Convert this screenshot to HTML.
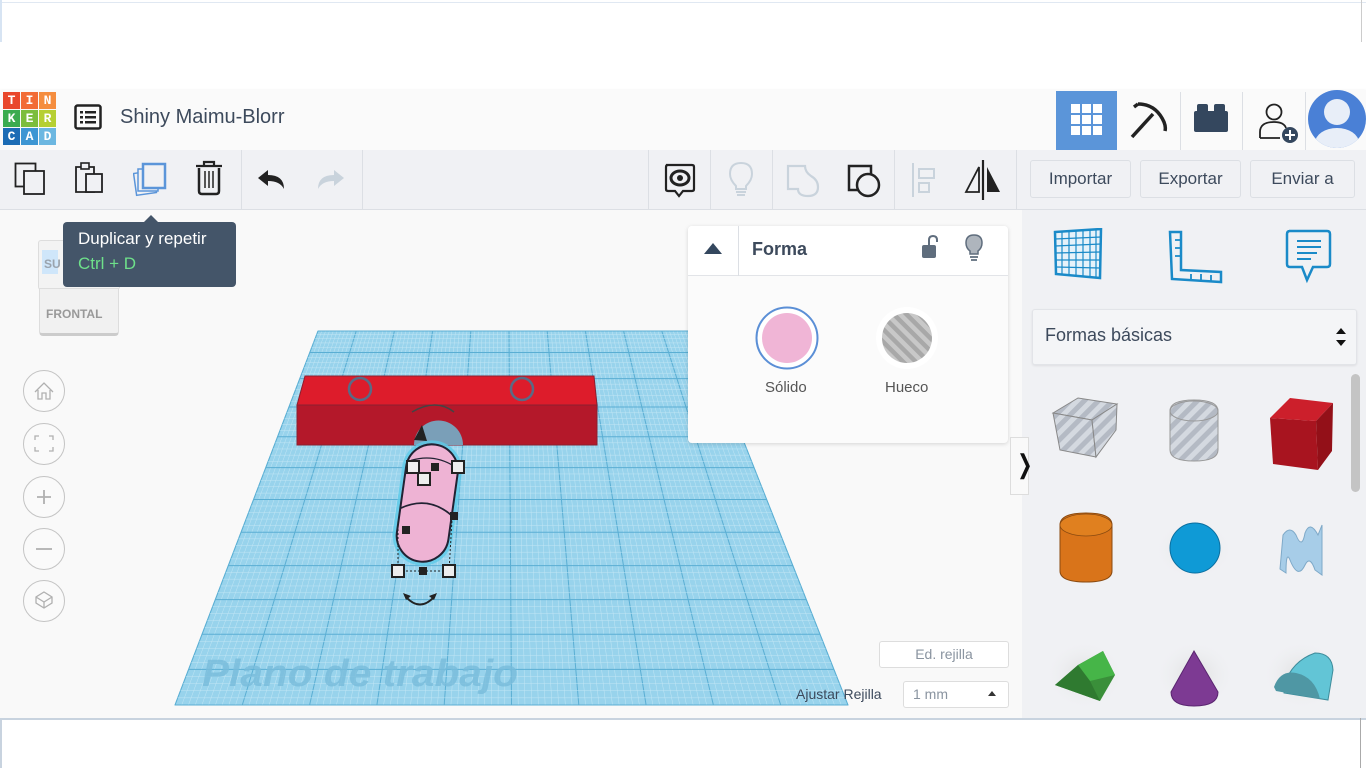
<!DOCTYPE html>
<html><head><meta charset="utf-8">
<style>
*{box-sizing:border-box;margin:0;padding:0}
body{width:1366px;height:768px;overflow:hidden;background:#fff;font-family:"Liberation Sans",sans-serif;position:relative}
.a{position:absolute}
.hdr{left:0;top:90px;width:1366px;height:60px;background:#fafafa;box-shadow:0 1px 3px rgba(0,0,0,.12)}
.tb{left:0;top:150px;width:1366px;height:60px;background:#f0f1f4;border-bottom:1px solid #dcdfe4}
.logo div{position:absolute;width:17px;height:17px;color:#fff;font:bold 13px "Liberation Mono",monospace;text-align:center;line-height:17px}
.btn{top:160px;height:38px;border:1px solid #dcdfe4;border-radius:3px;background:#f0f1f4;color:#3d4a5c;font-size:17px;text-align:center;line-height:36px}
.sep{width:1px;background:#dcdfe4}
.nav{left:23px;width:42px;height:42px;border:1px solid #c4c4c4;border-radius:50%;background:#fafafa}
</style></head><body>
<div class="a" style="left:0;top:0;width:1366px;height:3px;border-bottom:1px solid #e0e8f2"></div>
<div class="a" style="left:0;top:0;width:2px;height:42px;background:#d7e4f3"></div>
<div class="a" style="left:1361px;top:0;width:5px;height:42px;border-left:1px solid #ccc"></div>

<div class="a hdr"></div>
<div class="a logo" style="left:3px;top:92px;width:54px;height:54px">
<div style="left:0;top:0;background:#e9472c">T</div><div style="left:18px;top:0;background:#f26c36">I</div><div style="left:36px;top:0;background:#f58d3e">N</div>
<div style="left:0;top:18px;background:#3bab4f">K</div><div style="left:18px;top:18px;background:#7cbd3c">E</div><div style="left:36px;top:18px;background:#b6cf33">R</div>
<div style="left:0;top:36px;background:#1c6cb5">C</div><div style="left:18px;top:36px;background:#3d96d3">A</div><div style="left:36px;top:36px;background:#6cb7e1">D</div>
</div>
<svg class="a" style="left:74px;top:104px" width="28" height="26" viewBox="0 0 28 26"><rect x="1.5" y="1.5" width="25" height="23" rx="2" fill="none" stroke="#222" stroke-width="2.5"/><g fill="#222"><rect x="6" y="7" width="3" height="2.5"/><rect x="11" y="7" width="11" height="2.5"/><rect x="6" y="12" width="3" height="2.5"/><rect x="11" y="12" width="11" height="2.5"/><rect x="6" y="17" width="3" height="2.5"/><rect x="11" y="17" width="11" height="2.5"/></g></svg>
<div class="a" style="left:120px;top:106px;font-size:20px;color:#3d4a5c">Shiny Maimu-Blorr</div>
<div class="a" style="left:1056px;top:91px;width:61px;height:59px;background:#5b95d9"></div>
<svg class="a" style="left:1071px;top:104px" width="32" height="32"><g fill="#fff"><rect x="0" y="0" width="9" height="9"/><rect x="11" y="0" width="9" height="9"/><rect x="22" y="0" width="9" height="9"/><rect x="0" y="11" width="9" height="9"/><rect x="11" y="11" width="9" height="9"/><rect x="22" y="11" width="9" height="9"/><rect x="0" y="22" width="9" height="9"/><rect x="11" y="22" width="9" height="9"/><rect x="22" y="22" width="9" height="9"/></g></svg>
<svg class="a" style="left:1128px;top:100px" width="42" height="40" viewBox="0 0 42 40"><path d="M4 37 L25 14" stroke="#222" stroke-width="3.5"/><path d="M10 4 Q28 4 36 22 Q38 27 37 31" fill="none" stroke="#222" stroke-width="3.5"/><path d="M10 4 L6 7" stroke="#222" stroke-width="3.5"/></svg>
<div class="a sep" style="left:1180px;top:92px;height:58px"></div>
<svg class="a" style="left:1194px;top:104px" width="34" height="28"><rect x="0" y="7" width="34" height="21" rx="2" fill="#34475e"/><rect x="3" y="0" width="11" height="9" rx="2" fill="#34475e"/><rect x="20" y="0" width="11" height="9" rx="2" fill="#34475e"/></svg>
<div class="a sep" style="left:1242px;top:92px;height:58px"></div>
<svg class="a" style="left:1258px;top:100px" width="44" height="44" viewBox="0 0 44 44"><circle cx="16" cy="12" r="7.5" fill="none" stroke="#222" stroke-width="1.8"/><path d="M2 38 V32 Q2 22 16 22 Q26 22 28 28" fill="none" stroke="#222" stroke-width="1.8"/><path d="M2 38 H22" stroke="#222" stroke-width="1.8"/><circle cx="32" cy="35" r="8" fill="#34475e"/><path d="M32 30 V40 M27 35 H37" stroke="#fff" stroke-width="2"/></svg>
<div class="a sep" style="left:1305px;top:92px;height:58px"></div>
<div class="a" style="left:1308px;top:90px;width:58px;height:58px;border-radius:50%;background:#4a80d6;overflow:hidden"><div class="a" style="left:16px;top:9px;width:26px;height:26px;border-radius:50%;background:#e8eef8"></div><div class="a" style="left:7px;top:38px;width:44px;height:30px;border-radius:50%;background:#e8eef8"></div></div>

<div class="a tb"></div>
<svg class="a" style="left:14px;top:162px" width="32" height="34"><rect x="1.5" y="1.5" width="20" height="23" fill="none" stroke="#222" stroke-width="1.8"/><rect x="10" y="9" width="20" height="23" fill="#f0f1f4" stroke="#222" stroke-width="1.8"/></svg>
<svg class="a" style="left:74px;top:162px" width="30" height="34"><path d="M2 5 H20 V30 H2 Z" fill="none" stroke="#222" stroke-width="1.8"/><rect x="7" y="1" width="8" height="6" fill="#f0f1f4" stroke="#222" stroke-width="1.6"/><rect x="12" y="12" width="16" height="18" fill="#f0f1f4" stroke="#222" stroke-width="1.8"/></svg>
<svg class="a" style="left:133px;top:162px" width="36" height="36"><rect x="2" y="10" width="20" height="22" fill="none" stroke="#5b95d9" stroke-width="1.5" transform="rotate(-8 12 21)"/><rect x="5" y="7" width="20" height="22" fill="#f0f1f4" stroke="#5b95d9" stroke-width="1.5"/><rect x="10" y="2" width="22" height="24" fill="#f0f1f4" stroke="#5b95d9" stroke-width="2.5"/></svg>
<svg class="a" style="left:194px;top:160px" width="30" height="36"><path d="M2 6 H28 M10 6 V2 H20 V6" fill="none" stroke="#222" stroke-width="2.2"/><path d="M5 8 V31 Q5 34 8 34 H22 Q25 34 25 31 V8" fill="none" stroke="#222" stroke-width="2.5"/><path d="M11 11 V28 M15 11 V28 M19 11 V28" stroke="#222" stroke-width="1.5"/></svg>
<div class="a sep" style="left:241px;top:150px;height:59px"></div>
<svg class="a" style="left:256px;top:168px" width="32" height="22"><path d="M12 2 L2 10 L12 18 V13 Q24 13 28 21 Q28 7 12 7 Z" fill="#222"/></svg>
<svg class="a" style="left:314px;top:168px" width="32" height="22"><path d="M20 2 L30 10 L20 18 V13 Q8 13 4 21 Q4 7 20 7 Z" fill="#c9d3dc"/></svg>
<div class="a sep" style="left:362px;top:150px;height:59px"></div>
<div class="a sep" style="left:648px;top:150px;height:59px"></div>
<svg class="a" style="left:663px;top:162px" width="34" height="38"><path d="M3 3 H29 Q31 3 31 5 V27 Q31 29 29 29 H20 L16 34 L12 29 H5 Q3 29 3 27 V5 Q3 3 5 3Z" fill="none" stroke="#222" stroke-width="2.2"/><ellipse cx="17" cy="16" rx="9" ry="7" fill="none" stroke="#222" stroke-width="3"/><circle cx="17" cy="16" r="3" fill="#222"/></svg>
<div class="a sep" style="left:710px;top:150px;height:59px"></div>
<svg class="a" style="left:727px;top:161px" width="28" height="36"><path d="M14 2 Q25 2 25 13 Q25 19 19 25 V28 H9 V25 Q3 19 3 13 Q3 2 14 2Z" fill="none" stroke="#c9d3dc" stroke-width="2"/><path d="M9 31 H19 M10 34 H18" stroke="#c9d3dc" stroke-width="2"/></svg>
<div class="a sep" style="left:772px;top:150px;height:59px"></div>
<svg class="a" style="left:785px;top:163px" width="36" height="36"><path d="M3 3 H20 Q20 9 26 13 Q33 17 33 24 Q33 33 23 33 Q13 33 13 26 H3 Z" fill="none" stroke="#c9d3dc" stroke-width="2.2"/></svg>
<svg class="a" style="left:846px;top:163px" width="36" height="36"><rect x="3" y="3" width="22" height="24" fill="none" stroke="#222" stroke-width="2.5"/><circle cx="22" cy="22" r="11" fill="#f0f1f4" stroke="#222" stroke-width="2.5"/></svg>
<div class="a sep" style="left:894px;top:150px;height:59px"></div>
<svg class="a" style="left:910px;top:163px" width="30" height="36"><path d="M3 0 V34" stroke="#c9d3dc" stroke-width="2"/><rect x="9" y="6" width="15" height="9" fill="none" stroke="#c9d3dc" stroke-width="2"/><rect x="9" y="20" width="10" height="9" fill="none" stroke="#c9d3dc" stroke-width="2"/></svg>
<svg class="a" style="left:963px;top:160px" width="40" height="40"><path d="M20 0 V40" stroke="#222" stroke-width="2.2"/><path d="M16 7 L3 32 H16 Z" fill="none" stroke="#222" stroke-width="1.8"/><path d="M24 7 L37 32 H24 Z" fill="#222"/></svg>
<div class="a sep" style="left:1016px;top:150px;height:59px"></div>
<div class="a btn" style="left:1030px;width:101px">Importar</div>
<div class="a btn" style="left:1140px;width:101px">Exportar</div>
<div class="a btn" style="left:1250px;width:105px">Enviar a</div>

<!-- canvas -->
<div class="a" style="left:0;top:210px;width:1022px;height:508px;background:#f9f9f9"></div>
<div class="a" style="left:1022px;top:210px;width:344px;height:508px;background:#f0f1f4"></div>

<svg id="wp" class="a" style="left:0;top:0" width="1022" height="718"></svg>

<!-- view cube -->
<div class="a" style="left:38px;top:240px;width:82px;height:50px;background:#f3f3f3;border:1px solid #ddd;border-radius:3px"></div>
<div class="a" style="left:42px;top:250px;width:16px;height:24px;background:#cfe6fa"></div>
<div class="a" style="left:44px;top:257px;font:bold 12px 'Liberation Sans';color:#9aa3ad">SU</div>
<div class="a" style="left:39px;top:288px;width:80px;height:48px;background:#f1f1f1;border:1px solid #ddd;border-bottom:3px solid #ccc;border-radius:0 0 4px 4px"></div>
<div class="a" style="left:46px;top:307px;font:bold 12px 'Liberation Sans';color:#999">FRONTAL</div>

<div class="a nav" style="top:370px"></div>
<div class="a nav" style="top:423px"></div>
<div class="a nav" style="top:476px"></div>
<div class="a nav" style="top:528px"></div>
<div class="a nav" style="top:580px"></div>
<svg class="a" style="left:23px;top:370px" width="42" height="252" fill="none" stroke="#b0b0b0" stroke-width="1.3"><path d="M12 22 L21 13 L30 22 M15 20 V29 H19 V23 H23 V29 H27 V20"/><path d="M12 70 V66 H16 M26 66 H30 V70 M30 77 V81 H26 M16 81 H12 V77"/><path d="M21 120 V134 M14 127 H28" stroke-width="1.8"/><path d="M13 179 H29" stroke-width="1.8"/><path d="M21 222 L29 227 V233 L21 238 L13 233 V227 Z M13 227 L21 232 L29 227 M21 232 V238"/></svg>

<!-- tooltip -->
<div class="a" style="left:63px;top:222px;width:173px;height:65px;background:#445569;border-radius:4px"></div>
<div class="a" style="left:143px;top:215px;width:0;height:0;border-left:8px solid transparent;border-right:8px solid transparent;border-bottom:8px solid #445569"></div>
<div class="a" style="left:78px;top:229px;font-size:17px;color:#fff">Duplicar y repetir</div>
<div class="a" style="left:78px;top:254px;font-size:17px;color:#6ee08a">Ctrl + D</div>

<!-- forma panel -->
<div class="a" style="left:688px;top:226px;width:320px;height:217px;background:#fbfbfb;border-radius:4px;box-shadow:0 1px 4px rgba(0,0,0,.15)"></div>
<div class="a" style="left:688px;top:226px;width:320px;height:50px;background:#fff;border-bottom:1px solid #e2e4e8;border-radius:4px 4px 0 0"></div>
<div class="a sep" style="left:738px;top:226px;height:50px"></div>
<div class="a" style="left:704px;top:243px;width:0;height:0;border-left:9px solid transparent;border-right:9px solid transparent;border-bottom:11px solid #34475e"></div>
<div class="a" style="left:752px;top:239px;font-size:18px;font-weight:bold;color:#3d4a5c">Forma</div>
<svg class="a" style="left:920px;top:234px" width="22" height="26"><path d="M9 11 V6 Q9 2 13 2 Q17 2 17 6 V8" fill="none" stroke="#5f6d7d" stroke-width="2"/><rect x="2" y="11" width="14" height="13" rx="2" fill="#5f6d7d"/></svg>
<svg class="a" style="left:963px;top:234px" width="22" height="28"><path d="M11 1 Q19 1 19 9 Q19 14 15 17 V20 H7 V17 Q3 14 3 9 Q3 1 11 1Z" fill="#aeb5bd" stroke="#5f6d7d" stroke-width="1.5"/><path d="M7 23 H15 M8 26 H14" stroke="#5f6d7d" stroke-width="1.8"/></svg>
<svg class="a" style="left:754px;top:305px" width="200" height="66"><circle cx="33" cy="33" r="30.5" fill="#fff" stroke="#5b8fd6" stroke-width="2"/><circle cx="33" cy="33" r="25" fill="#f0b5d6"/><defs><pattern id="st" width="9" height="9" patternUnits="userSpaceOnUse" patternTransform="rotate(-45)"><rect width="9" height="9" fill="#c8c8c8"/><rect width="4.5" height="9" fill="#a8a8a8"/></pattern></defs><circle cx="153" cy="33" r="31" fill="#fff"/><circle cx="153" cy="33" r="25" fill="url(#st)"/></svg>
<div class="a" style="left:765px;top:379px;font-size:15px;color:#555">Sólido</div>
<div class="a" style="left:885px;top:379px;font-size:15px;color:#555">Hueco</div>

<div class="a" style="left:1010px;top:437px;width:19px;height:58px;background:#f9f9f9;border:1px solid #ddd"></div>
<div class="a" style="left:1014px;top:449px;font-size:26px;color:#111;transform:scaleX(.7)">❯</div>

<div class="a" style="left:879px;top:641px;width:130px;height:27px;border:1px solid #ddd;border-radius:3px;background:#fff;color:#8a94a0;font-size:14px;text-align:center;line-height:25px">Ed. rejilla</div>
<div class="a" style="left:796px;top:686px;font-size:14px;color:#3d4a5c">Ajustar Rejilla</div>
<div class="a" style="left:903px;top:681px;width:106px;height:27px;border:1px solid #ddd;border-radius:3px;background:#fff;color:#8a94a0;font-size:14px;line-height:25px;padding-left:9px">1 mm</div>
<div class="a" style="left:988px;top:691px;width:0;height:0;border-left:4px solid transparent;border-right:4px solid transparent;border-bottom:5px solid #333"></div>

<!-- right panel -->
<svg class="a" style="left:1052px;top:228px" width="52" height="54"><path d="M3 4 L49 1 L48 50 L4 46 Z" fill="#e6f2fa" stroke="#1a8ac8" stroke-width="2.5"/><g stroke="#1a8ac8" stroke-width="1.2"><path d="M10 4 L10 47 M17 3 L17 47 M24 3 L24 48 M31 2 L31 48 M38 2 L38 49 M44 2 L44 50"/><path d="M3 11 L49 9 M3 18 L49 16 M3 25 L48 24 M4 32 L48 32 M4 39 L48 40"/></g></svg>
<svg class="a" style="left:1167px;top:230px" width="58" height="56"><path d="M3 2 H14 V40 L54 42 V52 L5 49 Z" fill="none" stroke="#1a8ac8" stroke-width="2.5"/><path d="M8 10 H14 M8 18 H14 M8 26 H14 M24 44 V50 M34 44 V50 M44 45 V51" stroke="#1a8ac8" stroke-width="1.8"/></svg>
<svg class="a" style="left:1285px;top:228px" width="48" height="56"><path d="M4 3 H42 Q45 3 45 6 V36 Q45 39 42 39 H28 L22 52 L17 39 H5 Q2 39 2 36 V6 Q2 3 5 3Z" fill="none" stroke="#1a8ac8" stroke-width="2.5"/><path d="M12 13 H36 M12 19 H36 M12 25 H32 M12 31 H26" stroke="#1a8ac8" stroke-width="2"/></svg>
<div class="a" style="left:1032px;top:309px;width:325px;height:56px;background:#f4f5f7;border:1px solid #e2e4e8;border-radius:3px;box-shadow:0 1px 2px rgba(0,0,0,.08)"></div>
<div class="a" style="left:1045px;top:325px;font-size:18px;color:#3d4a5c">Formas básicas</div>
<div class="a" style="left:1336px;top:328px;width:0;height:0;border-left:5px solid transparent;border-right:5px solid transparent;border-bottom:6px solid #111"></div>
<div class="a" style="left:1336px;top:340px;width:0;height:0;border-left:5px solid transparent;border-right:5px solid transparent;border-top:6px solid #111"></div>
<div class="a" style="left:1351px;top:374px;width:9px;height:118px;border-radius:5px;background:#c4c4c4"></div>
<svg class="a" style="left:1040px;top:385px" width="310" height="330">
<defs><pattern id="st2" width="10" height="10" patternUnits="userSpaceOnUse" patternTransform="rotate(45)"><rect width="10" height="10" fill="#d4d9e0"/><rect width="5" height="10" fill="#b4bac4"/></pattern>
<radialGradient id="sh"><stop offset="0" stop-color="#ddd"/><stop offset="1" stop-color="#f0f1f4" stop-opacity="0"/></radialGradient></defs>
<path d="M13 28 L38 13 L77 19 L52 35 Z" fill="url(#st2)" stroke="#888"/>
<path d="M13 28 L52 35 L56 72 L20 65 Z" fill="url(#st2)" stroke="#888"/>
<path d="M52 35 L77 19 L76 45 L56 72 Z" fill="url(#st2)" stroke="#888"/>
<path d="M130 26 Q130 15 154 15 Q178 15 178 26 V65 Q178 76 154 76 Q130 76 130 65Z" fill="url(#st2)" stroke="#999"/><ellipse cx="154" cy="26" rx="24" ry="10" fill="none" stroke="#999"/>
<path d="M230 33 L276 36 L278 85 L233 79 Z" fill="#a8141f"/><path d="M230 33 L250 13 L293 18 L276 36 Z" fill="#cc1f2b"/><path d="M276 36 L293 18 L292 66 L278 85 Z" fill="#931018"/>
<ellipse cx="154" cy="165" rx="40" ry="30" fill="url(#sh)"/>
<path d="M20 140 Q20 128 46 128 Q72 128 72 140 V186 Q72 197 46 197 Q20 197 20 186Z" fill="#d9741a" stroke="#8a4a10"/><ellipse cx="46" cy="140" rx="26" ry="11" fill="#e0801f" stroke="#8a4a10" stroke-width=".8"/>
<circle cx="155" cy="163" r="25" fill="#0f9ad6"/><circle cx="155" cy="163" r="25" fill="none" stroke="#0a6e9f"/>
<path d="M243 150 Q250 140 256 150 Q262 165 265 148 Q270 135 278 150 L282 140 V190 L275 185 Q270 170 265 180 Q258 195 250 175 Q246 165 246 188 L240 184 Z" fill="#a7cde8" stroke="#7ea9c8"/>
<ellipse cx="45" cy="290" rx="40" ry="35" fill="url(#sh)"/><ellipse cx="155" cy="290" rx="40" ry="35" fill="url(#sh)"/><ellipse cx="262" cy="290" rx="40" ry="35" fill="url(#sh)"/>
<path d="M15 300 L38 280 L63 266 L75 290 L60 316 Z" fill="#3a8f3a"/><path d="M38 280 L63 266 L75 290 L50 296 Z" fill="#46b548"/><path d="M15 300 L38 280 L50 296 L60 316Z" fill="#2f7a30"/>
<path d="M154 266 L131 307 Q131 321 154 321 Q178 321 178 307 Z" fill="#7d3a93" stroke="#5a2570"/>
<path d="M244 300 Q252 276 275 268 Q292 268 293 285 L288 315 L244 308 Z" fill="#62c5d6" stroke="#3e8c9b"/><path d="M234 302 Q240 285 256 288 Q275 292 280 314 L236 306Z" fill="#4f97a4"/>
</svg>

<!-- bottom -->
<div class="a" style="left:0;top:718px;width:1366px;height:50px;background:#fff;border-top:2px solid #c8d3df;border-left:2px solid #c8d3df"></div>
<div class="a" style="left:1360px;top:718px;width:6px;height:50px;border-left:1px solid #aaa"></div>

<script>
(function(){
var s=document.getElementById('wp'),h='';
var tl=318,tr=700,ty=331,bl=175,br=848,by=705;
h+='<polygon points="'+tl+','+ty+' '+tr+','+ty+' '+br+','+by+' '+bl+','+by+'" fill="#98d3ec" stroke="#7fc6e3"/>';
var nv=100,nh=60;
function Y(t){return ty+(by-ty)*t;}
for(var i=0;i<=nv;i++){var t=i/nv;var x1=tl+(tr-tl)*t,x2=bl+(br-bl)*t;var m=i%10==0;h+='<line x1="'+x1+'" y1="'+ty+'" x2="'+x2+'" y2="'+by+'" stroke="'+(m?'#5aaed3':'#c2e6f5')+'" stroke-width="'+(m?1:0.5)+'"/>';}
for(var j=0;j<=nh;j++){var t=Math.pow(j/nh,1.15);var y=Y(t);var xa=tl+(bl-tl)*t,xb=tr+(br-tr)*t;var m=j%5==0;h+='<line x1="'+xa+'" y1="'+y+'" x2="'+xb+'" y2="'+y+'" stroke="'+(m?'#5aaed3':'#c2e6f5')+'" stroke-width="'+(m?1:0.5)+'"/>';}
h+='<text x="202" y="686" font-family="Liberation Sans" font-weight="bold" font-style="italic" font-size="38" textLength="316" lengthAdjust="spacingAndGlyphs" fill="#78bcdb" opacity=".8">Plano de trabajo</text>';
// red box
h+='<polygon points="305,376 594,376 597,405 297,405" fill="#dd1c2b" stroke="#8a2030" stroke-width="1"/>';
h+='<rect x="297" y="405" width="300" height="40" fill="#b4182a" stroke="#8a2030" stroke-width="1"/>';
h+='<circle cx="360" cy="389" r="11" fill="none" stroke="#5a6a85" stroke-width="2.5"/><circle cx="522" cy="389" r="11" fill="none" stroke="#5a6a85" stroke-width="2.5"/>';
h+='<path d="M414 445 A24 24 0 0 1 463 445 Z" fill="#7a9fb8"/>';
h+='<path d="M412 412 Q436 398 454 412" fill="none" stroke="#444" stroke-width="1.5"/>';
// pill
h+='<g transform="rotate(8 427 505)"><rect x="397" y="440" width="60" height="126" rx="30" fill="#5ccbe8" opacity=".8"/><rect x="401" y="444" width="52" height="118" rx="26" fill="#eeb3d4" stroke="#223" stroke-width="2"/><path d="M401 512 Q427 495 453 512" fill="none" stroke="#223" stroke-width="1.8"/><path d="M405 463 Q427 453 449 463" fill="none" stroke="#223" stroke-width="1.2"/></g>';
h+='<path d="M414 440 L422 425 L427 441Z" fill="#222"/>';
h+='<path d="M398 571 L398 520 M449 571 L452 520 M398 571 L449 571" stroke="#222" stroke-dasharray="2 2" fill="none"/>';
var wh=[[413,467],[458,467],[424,479],[398,571],[449,571]];
wh.forEach(function(p){h+='<rect x="'+(p[0]-6)+'" y="'+(p[1]-6)+'" width="12" height="12" fill="#eee" stroke="#222" stroke-width="2"/>';});
[[435,467],[406,530],[454,516],[423,571]].forEach(function(p){h+='<rect x="'+(p[0]-4)+'" y="'+(p[1]-4)+'" width="8" height="8" fill="#222"/>';});
h+='<path d="M406 597 Q420 612 434 597" fill="none" stroke="#222" stroke-width="2"/><path d="M403 593 L406 600 L411 596 Z M437 593 L434 600 L429 596Z" fill="#222"/>';
s.innerHTML=h;})();
</script>
</body></html>
